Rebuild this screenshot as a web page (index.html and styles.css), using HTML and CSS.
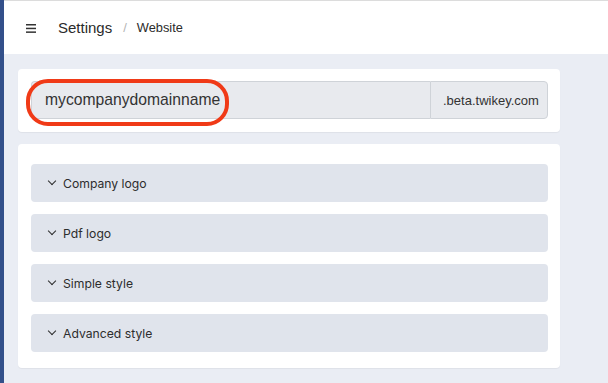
FILE: index.html
```html
<!DOCTYPE html>
<html lang="en">
<head>
    <meta charset="UTF-8">
    <meta name="viewport" content="width=device-width, initial-scale=1.0">
    <title>Settings - Website</title>
    <link rel="stylesheet" href="styles.css">
</head>
<body>
    <div class="layout">
        <div class="sidebar"></div>

        <div class="main">
            <header class="topbar">
                <span class="menu-icon">
                    <svg width="10" height="9" viewBox="0 0 10 9">
                        <rect x="0" y="0" width="10" height="1.5" fill="#333"/>
                        <rect x="0" y="3.7" width="10" height="1.5" fill="#333"/>
                        <rect x="0" y="7.4" width="10" height="1.5" fill="#333"/>
                    </svg>
                </span>
                <span class="crumb-title">Settings</span>
                <span class="crumb-sep">/</span>
                <span class="crumb-page">Website</span>
            </header>

            <div class="content">
                <div class="card domain-card">
                    <div class="input-group">
                        <input type="text" class="domain-input" value="mycompanydomainname" disabled>
                        <span class="input-addon">.beta.twikey.com</span>
                        <span class="highlight"></span>
                    </div>
                </div>

                <div class="card sections">
                    <div class="section-item"><span class="chevron"></span>Company logo</div>
                    <div class="section-item"><span class="chevron"></span>Pdf logo</div>
                    <div class="section-item"><span class="chevron"></span>Simple style</div>
                    <div class="section-item"><span class="chevron"></span>Advanced style</div>
                </div>
            </div>
        </div>
    </div>
</body>
</html>
```

FILE: styles.css
```css
html, body {
    height: 100%;
}

body {
    margin: 0;
    padding: 0;
    font-family: "Liberation Sans", Arial, sans-serif;
    color: #333;
    background-color: #eaedf4;
}

.layout {
    display: flex;
    min-height: 100%;
}

.sidebar {
    width: 4px;
    flex-shrink: 0;
    background-color: #33508a;
}

.main {
    flex: 1;
    display: flex;
    flex-direction: column;
}

.topbar {
    display: flex;
    align-items: center;
    height: 53px;
    padding-left: 22px;
    background-color: #fff;
    border-top: 1px solid #dcdcdc;
}

.menu-icon {
    display: flex;
    margin-right: 22px;
    margin-top: 1px;
}

.crumb-title {
    font-size: 15px;
    color: #2b2b2b;
}

.crumb-sep {
    margin: 0 10px 0 11px;
    font-size: 13px;
    color: #b5b5b5;
}

.crumb-page {
    font-size: 12.8px;
    color: #2b2b2b;
}

.content {
    padding: 15px 48px 14px 14px;
}

.card {
    background-color: #fff;
    border-radius: 4px;
    box-shadow: 0 1px 1px rgba(0, 0, 0, 0.05);
}

.domain-card {
    padding: 12px 12px 13px 13px;
    margin-bottom: 12px;
}

.input-group {
    position: relative;
    display: flex;
    height: 38px;
}

.domain-input {
    flex: 1;
    min-width: 0;
    margin: 0;
    padding: 0 13px;
    font-family: "Liberation Sans", Arial, sans-serif;
    font-size: 15.7px;
    color: #333;
    background-color: #e8eaee;
    border: 1px solid #cfd3d8;
    border-right: none;
    border-radius: 4px 0 0 4px;
}

.input-addon {
    display: flex;
    align-items: center;
    width: 118px;
    box-sizing: border-box;
    padding-left: 12px;
    font-size: 13px;
    color: #333;
    background-color: #e8eaee;
    border: 1px solid #cfd3d8;
    border-radius: 0 4px 4px 0;
}

/* red annotation ring around the domain name */
.highlight {
    position: absolute;
    left: -5px;
    top: -2px;
    width: 203px;
    height: 47px;
    box-sizing: border-box;
    border: 4px solid #f03a17;
    border-radius: 22px;
    pointer-events: none;
}

.sections {
    display: flex;
    flex-direction: column;
    gap: 12px;
    padding: 20px 12px 16px 13px;
}

.section-item {
    display: flex;
    align-items: center;
    height: 38px;
    padding-left: 17px;
    font-family: Inter, "Noto Sans", sans-serif;
    font-size: 12.2px;
    color: #2d2d2d;
    background-color: #e0e4ec;
    border-radius: 4px;
}

.chevron {
    width: 5px;
    height: 5px;
    margin: -4px 8px 0 1px;
    border-right: 1.6px solid #2d2d2d;
    border-bottom: 1.6px solid #2d2d2d;
    transform: rotate(45deg);
}
```
